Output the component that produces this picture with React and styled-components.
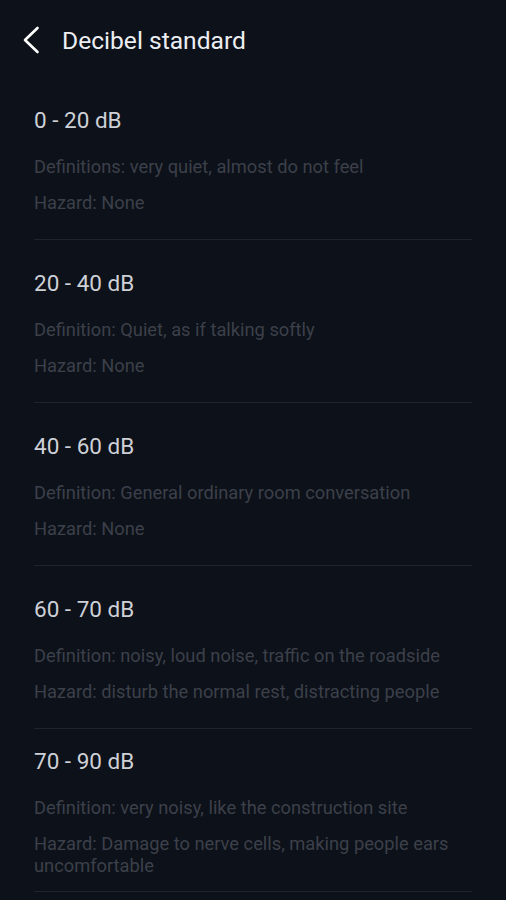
import React from "react";
import styled, { createGlobalStyle } from "styled-components";

const Global = createGlobalStyle`
  html, body { margin: 0; padding: 0; background: #0d1119; }
  body { font-family: Roboto, "Noto Sans", "Liberation Sans", sans-serif; }
`;

const Page = styled.div`
  width: 506px;
  min-height: 900px;
  background: #0d1119;
  box-sizing: border-box;
`;

const Header = styled.header`
  height: 77px;
  display: flex;
  align-items: center;
  padding: 3px 0 0 20px;
  box-sizing: border-box;
`;

const BackButton = styled.button`
  width: 22px;
  height: 30px;
  padding: 0;
  margin: 0 20px 0 0;
  border: 0;
  background: transparent;
  display: flex;
  align-items: center;
  justify-content: center;
  cursor: pointer;
`;

const Title = styled.h1`
  margin: 0;
  font-size: 24.6px;
  font-weight: 400;
  color: #eceef2;
`;

const List = styled.div`
  padding: 0 34px;
`;

const Section = styled.section`
  height: 163px;
  box-sizing: border-box;
  padding-top: 4px;
  border-bottom: 1px solid #1f232b;
  display: flex;
  flex-direction: column;
  justify-content: center;
`;

const RangeTitle = styled.div`
  font-size: 22.5px;
  line-height: 28px;
  color: #cdd0d6;
  margin-bottom: 22px;
`;

const Line = styled.div`
  font-size: 18.3px;
  line-height: 22px;
  color: #3c404a;
  margin-top: ${(p) => (p.$second ? "14px" : "0")};
`;

const data = [
  {
    range: "0 - 20 dB",
    def: "Definitions: very quiet, almost do not feel",
    hazard: "Hazard: None",
  },
  {
    range: "20 - 40 dB",
    def: "Definition: Quiet, as if talking softly",
    hazard: "Hazard: None",
  },
  {
    range: "40 - 60 dB",
    def: "Definition: General ordinary room conversation",
    hazard: "Hazard: None",
  },
  {
    range: "60 - 70 dB",
    def: "Definition: noisy, loud noise, traffic on the roadside",
    hazard: "Hazard: disturb the normal rest, distracting people",
  },
  {
    range: "70 - 90 dB",
    def: "Definition: very noisy, like the construction site",
    hazard: "Hazard: Damage to nerve cells, making people ears uncomfortable",
  },
];

export default function App() {
  return (
    <Page>
      <Global />
      <Header>
        <BackButton aria-label="Back">
          <svg width="20" height="28" viewBox="0 0 20 28" fill="none">
            <path
              d="M16.5 2 L4 14 L16.5 26"
              stroke="#ffffff"
              strokeWidth="2.6"
              strokeLinecap="round"
              strokeLinejoin="round"
            />
          </svg>
        </BackButton>
        <Title>Decibel standard</Title>
      </Header>
      <List>
        {data.map((d) => (
          <Section key={d.range}>
            <RangeTitle>{d.range}</RangeTitle>
            <Line>{d.def}</Line>
            <Line $second>{d.hazard}</Line>
          </Section>
        ))}
      </List>
    </Page>
  );
}
